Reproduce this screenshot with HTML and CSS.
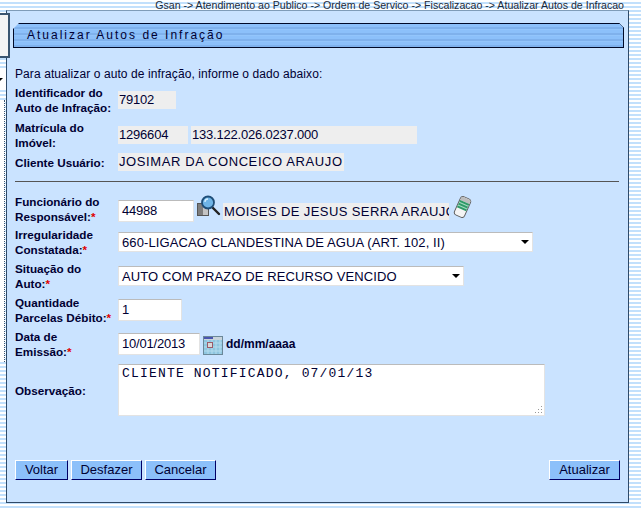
FILE: index.html
```html
<!DOCTYPE html>
<html lang="pt">
<head>
<meta charset="utf-8">
<title>Atualizar Autos de Infração</title>
<link rel="stylesheet" href="styles.css">
</head>
<body>
<div class="side-box"></div>
<div class="side-tab"><i class="side-arrow"></i></div>
<div class="side-rail"></div>
<p class="crumb">Gsan -&gt; Atendimento ao Publico -&gt; Ordem de Servico -&gt; Fiscalizacao -&gt; Atualizar Autos de Infracao</p>
<main class="panel">
  <h1 class="title">Atualizar Autos de Infração</h1>
  <p class="intro">Para atualizar o auto de infração, informe o dado abaixo:</p>
  <div class="row h-id"><div class="label">Identificador do<br>Auto de Infração:</div><div class="field"><span class="ro w-id">79102</span></div></div>
  <div class="row h-mat"><div class="label">Matrícula do<br>Imóvel:</div><div class="field gap3"><span class="ro w-mat">1296604</span><span class="ro w-insc">133.122.026.0237.000</span></div></div>
  <div class="row h-cli"><div class="label">Cliente Usuário:</div><div class="field"><span class="ro w-cli">JOSIMAR DA CONCEICO ARAUJO</span></div></div>
  <hr class="rule">
  <div class="row h-func"><div class="label">Funcionário do<br>Responsável:<em>*</em></div><div class="field f-func">
    <span class="input w-func">44988</span>
    <svg class="ic-search" width="24" height="22" viewBox="0 0 24 22"><rect x=".5" y="8.500" width="11" height="12" fill="#c4c4c4" stroke="#555"/><path d="M1 9h5v11H1z" fill="#7d7d7d"/><path d="M15 12l7 7" stroke="#222" stroke-width="2.400" stroke-linecap="round"/><circle cx="11" cy="7.500" r="6" fill="#6fb4e6" stroke="#1f4e78" stroke-width="1.800"/><path d="M8 7a3 3 0 0 1 3-3" stroke="#d8f0ff" stroke-width="1.300" fill="none"/></svg>
    <span class="ro w-nome">MOISES DE JESUS SERRA ARAUJO</span>
    <svg class="ic-eraser" width="19" height="22" viewBox="0 0 19 22"><g transform="rotate(24 9.500 11)"><rect x="4" y="1" width="11" height="20" rx="3" fill="#f4f4f4" stroke="#5e5e5e"/><path d="M4.500 2.500q0-1 2-1h6q2 0 2 1v3h-10z" fill="#bdbdbd"/><rect x="4.500" y="5.500" width="10" height="8" fill="#2f9a68"/><path d="M4.500 8h10M4.500 11h10" stroke="#a5dcc0"/></g></svg>
  </div></div>
  <div class="row h-irr"><div class="label">Irregularidade<br>Constatada:<em>*</em></div><div class="field"><span class="input select w-irr">660-LIGACAO CLANDESTINA DE AGUA (ART. 102, II)</span></div></div>
  <div class="row h-sit"><div class="label">Situação do<br>Auto:<em>*</em></div><div class="field"><span class="input select w-sit">AUTO COM PRAZO DE RECURSO VENCIDO</span></div></div>
  <div class="row h-qtd"><div class="label">Quantidade<br>Parcelas Débito:<em>*</em></div><div class="field"><span class="input w-qtd">1</span></div></div>
  <div class="row h-dat"><div class="label">Data de<br>Emissão:<em>*</em></div><div class="field">
    <span class="input w-dat">10/01/2013</span>
    <svg class="ic-cal" width="20" height="19" viewBox="0 0 20 19"><rect width="20" height="19" fill="#8fc6e0"/><rect x="0" y="0" width="20" height="4" fill="#c8d4dc"/><rect x=".5" y=".5" width="19" height="18" fill="none" stroke="#6b8899"/><rect x="1" y="1" width="9" height="2" fill="#4a55b0"/><path d="M1 7h18M1 11h18M1 15h18M5 4v14M9 4v14M13 4v14M17 4v14" stroke="#b5dcee"/><rect x="4.500" y="6.500" width="5" height="5" fill="#d9d9d9" stroke="#9a5a6a"/></svg>
    <strong class="hint">dd/mm/aaaa</strong>
  </div></div>
  <div class="row h-obs"><div class="label">Observação:</div><div class="field"><span class="area">CLIENTE NOTIFICADO, 07/01/13<svg class="grip" width="9" height="9" viewBox="0 0 9 9"><path d="M7 1h1v1H7zM4 4h1v1H4zM7 4h1v1H7zM1 7h1v1H1zM4 7h1v1H4zM7 7h1v1H7z" fill="#999"/></svg></span></div></div>
  <div class="actions">
    <div class="group"><span class="btn w-volt">Voltar</span><span class="btn w-desf">Desfazer</span><span class="btn w-canc">Cancelar</span></div>
    <span class="btn w-atu">Atualizar</span>
  </div>
</main>
</body>
</html>
```
FILE: styles.css
```css
* { box-sizing: border-box; }
html, body { margin: 0; height: 100%; }
body {
  width: 641px; height: 508px; overflow: hidden; position: relative;
  font: 12px/15px "Liberation Sans", Arial, sans-serif; color: #000033;
  background: repeating-linear-gradient(180deg, #ffffff 0 2px, #c2e0fc 2px 4px);
}
.crumb {
  margin: 0; height: 10px; padding-right: 17px; text-align: right;
  font-size: 10.600px; line-height: 10px; color: #1a2a3a; overflow: visible;
}
.panel {
  margin-left: 6px; width: 623px; height: 493px;
  background: #cae3ff; border: 1px solid #2f4a68; border-top-color: #7f9cb8;
  padding: 12px 5px 0 8px;
}
.title {
  margin: 0 0 0 -2px; height: 25px; width: 611px; position: relative;
  font-size: 12px; font-weight: normal; line-height: 23px; letter-spacing: 2px; padding-left: 13px;
  color: #000033;
  border: 1px solid #000a28;
  clip-path: polygon(6px 0, calc(100% - 5px) 0, 100% 5px, 100% 100%, 0 100%, 0 6px);
  background: repeating-linear-gradient(180deg, #8cc0fa 0 3px, #7fb1ec 3px 5px, #93c5fb 5px 6px);
}
.title::before, .title::after { content: ""; position: absolute; top: -1px; width: 8px; height: 8px; }
.title::before { left: -1px; background: linear-gradient(135deg, transparent 2.800px, #000a28 2.800px 4px, transparent 4px); }
.title::after { right: -1px; width: 7px; height: 7px; background: linear-gradient(225deg, transparent 2.500px, #000a28 2.500px 3.700px, transparent 3.700px); }
.intro { margin: 0; padding-top: 19px; height: 36px; letter-spacing: .09px; }
.row { display: flex; align-items: center; }
.label { width: 103px; flex: none; font-weight: bold; color: #000033; font-size: 11.700px; line-height: 15px; white-space: nowrap; }
.label em { color: #e00000; font-style: normal; }
.field { display: flex; align-items: center; }
.gap3 { gap: 3px; }
.h-id { height: 32px; }
.h-mat { height: 32px; margin-top: 3px; }
.h-cli { height: 22px; }
.ro { height: 18px; line-height: 18px; background: #eeeeee; padding-left: 1px; font-size: 13px; letter-spacing: -.2px; color: #000033; white-space: nowrap; overflow: hidden; }
.w-id { width: 58px; } .w-mat { width: 70px; } .w-insc { width: 226px; }
.w-cli { width: 226px; letter-spacing: .6px; }
.rule { height: 1px; margin: 8px 0 0 0; width: 604px; border: 0; background: #555; }
.input { display: block; height: 22px; background: #fff; border: 1px solid #e3e3e3; border-top-color: #bbb; padding-left: 3px; font-size: 13px; letter-spacing: -.2px; line-height: 20px; color: #000033; white-space: nowrap; }
.w-func { width: 76px; } .w-qtd { width: 64px; } .w-dat { width: 82px; }
.h-func { height: 33px; margin-top: 10px; }
.f-func { margin-top: 5px; }
.ic-search { margin: -10px 0 0 3px; flex: none; }
.w-nome { width: 226px; margin: 1px 0 0 2px; height: 17px; line-height: 17px; letter-spacing: .4px; }
.ic-eraser { margin: -9px 0 0 4px; flex: none; }
.h-irr { height: 34px; }
.h-sit { height: 34px; }
.h-qtd { height: 34px; }
.h-dat { height: 34px; }
.select { position: relative; height: 20px; line-height: 20px; letter-spacing: .1px; }
.select::after { content: ""; position: absolute; right: 3px; top: 7px; border: 4px solid transparent; border-top: 4px solid #000; border-bottom: 0; }
.w-irr { width: 415px; } .w-sit { width: 346px; }
.ic-cal { margin: 3px 0 0 3px; flex: none; }
.hint { margin-left: 3px; font-size: 12px; color: #000033; }
.h-obs { height: 52px; margin-top: 3px; }
.area { display: block; position: relative; width: 427px; height: 52px; background: #fff; border: 1px solid #e3e3e3; border-top-color: #bbb; padding: 2px 3px; font: 13px/14px "Liberation Mono", monospace; letter-spacing: 1.180px; color: #000033; }
.grip { position: absolute; right: 1px; bottom: 1px; }
.actions { display: flex; justify-content: space-between; width: 605px; margin-top: 44px; }
.group { display: flex; gap: 3px; }
.btn { display: block; height: 20px; background: #8cc0fa; border: 1px solid; border-color: #fff #000066 #000066 #fff; text-align: center; font-size: 13px; line-height: 18px; color: #000033; }
.w-volt { width: 53px; } .w-desf { width: 71px; } .w-canc { width: 71px; } .w-atu { width: 71px; }
.side-box { position: absolute; left: -2px; top: 13px; width: 12px; height: 45px; background: #f4f4f4; border: 2px solid #3a5570; z-index: 2; }
.side-tab { position: absolute; left: 0; top: 70px; width: 6px; height: 20px; background: #fff; z-index: 2; }
.side-arrow { position: absolute; left: 0; top: 8px; border: 3px solid transparent; border-top: 3px solid #000; border-left-width: 0; border-bottom: 0; }
.side-rail { position: absolute; left: 0; top: 100px; width: 5px; height: 262px; background: #fff; border-right: 1px dotted #3a5570; }
```
